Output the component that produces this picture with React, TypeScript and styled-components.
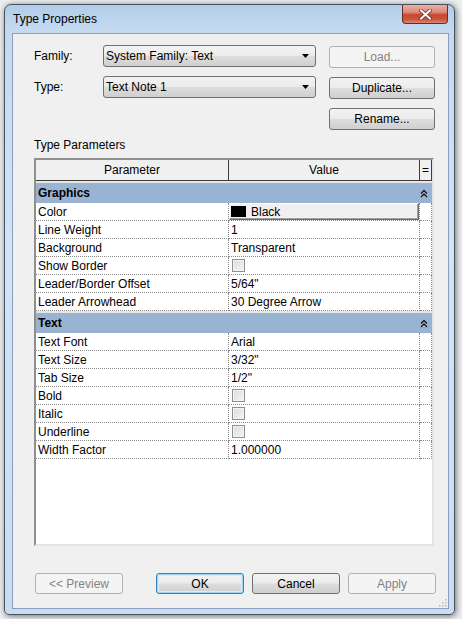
import React from "react";
import styled, { createGlobalStyle, css } from "styled-components";

const GlobalStyle = createGlobalStyle`
  html, body {
    margin: 0;
    padding: 0;
  }
  body {
    width: 462px;
    height: 619px;
    overflow: hidden;
    background: #eceef0;
    font-family: "Liberation Sans", Arial, sans-serif;
    font-size: 12px;
    color: #000;
  }
`;

const Window = styled.div`
  box-sizing: border-box;
  margin: 4px 0 0 4px;
  width: 451px;
  height: 611px;
  border: 1px solid #46525e;
  border-radius: 7px 7px 5px 5px;
  background: linear-gradient(
    180deg,
    #b2cce8 0%,
    #c4daf1 4%,
    #d2e4f6 40%,
    #c9ddf2 100%
  );
  padding: 0 5px 5px 7px;
  display: flex;
  flex-direction: column;
  box-shadow: 1px 1px 6px rgba(0, 0, 0, 0.55);
`;

const TitleBar = styled.div`
  height: 28px;
  display: flex;
  justify-content: space-between;
  align-items: flex-start;
`;

const TitleText = styled.span`
  padding-left: 1px;
  line-height: 29px;
  font-size: 12px;
  color: #000;
`;

const CloseButton = styled.div`
  box-sizing: border-box;
  width: 46px;
  height: 19px;
  margin-right: 1px;
  border: 1px solid #6b2a22;
  border-top: none;
  border-radius: 0 0 4px 4px;
  background: linear-gradient(
    180deg,
    #eab0a2 0%,
    #dc8a79 40%,
    #c6482f 55%,
    #c9553c 80%,
    #dc8a6e 100%
  );
  display: flex;
  align-items: center;
  justify-content: center;
`;

const Client = styled.div`
  position: relative;
  flex: 1;
  box-sizing: border-box;
  border: 1px solid #8a9fba;
  background: #f0f0f0;
  padding: 11px 12px 0 21px;
  display: flex;
  flex-direction: column;
`;

const FormGrid = styled.div`
  display: grid;
  grid-template-columns: 56px 213px 106px;
  grid-template-rows: repeat(3, 22px);
  column-gap: 13px;
  row-gap: 9px;
`;

const FieldLabel = styled.span`
  align-self: center;
`;

const face = css`
  border: 1px solid #707070;
  border-radius: 3px;
  background: linear-gradient(
    180deg,
    #f3f3f3 0%,
    #ebebeb 48%,
    #dddddd 52%,
    #cfcfcf 100%
  );
`;

const Combo = styled.div`
  box-sizing: border-box;
  height: 22px;
  ${face};
  display: flex;
  align-items: center;
  justify-content: space-between;
  padding: 0 6px 0 2px;
`;

const Button = styled.button<{ $wide?: boolean; $default?: boolean }>`
  box-sizing: border-box;
  width: ${({ $wide }) => ($wide ? "106px" : "88px")};
  height: ${({ $wide }) => ($wide ? "22px" : "21px")};
  margin-top: ${({ $wide }) => ($wide ? "1px" : "0")};
  ${face};
  font: inherit;
  color: #000;
  padding: 0;
  ${({ $default }) =>
    $default &&
    css`
      border-color: #3c7fb1;
      box-shadow: inset 0 0 0 1px #9fd5f3, inset 0 0 0 2px #d6eefb;
    `}
  &:disabled {
    border-color: #adb2b5;
    background: #f4f4f4;
    color: #838383;
  }
`;

const SectionLabel = styled.div`
  margin-top: 9px;
  line-height: 15px;
`;

const Table = styled.div`
  box-sizing: border-box;
  width: 400px;
  height: 388px;
  margin-top: 5px;
  border: 2px solid;
  border-color: #8f8f8f #e4e4e4 #e4e4e4 #8f8f8f;
  background: #fff;
  display: flex;
  flex-direction: column;
`;

const Columns = css`
  display: grid;
  grid-template-columns: 193px 191px 12px;
`;

const HeaderRow = styled.div`
  ${Columns};
  height: 21px;
  background: #f0f0f0;
`;

const HeaderCell = styled.div`
  box-sizing: border-box;
  border-right: 1px solid #3c3c3c;
  border-bottom: 1px solid #3c3c3c;
  display: flex;
  align-items: center;
  justify-content: center;
`;

const GroupRow = styled.div`
  box-sizing: border-box;
  height: 22px;
  border-top: 2px solid #e6e6e6;
  background: #98b4d2;
  display: flex;
  align-items: center;
  justify-content: space-between;
  padding: 0 4px 0 2px;
  font-weight: bold;
`;

const DataRow = styled.div`
  ${Columns};
  height: 18px;
`;

const Cell = styled.div`
  box-sizing: border-box;
  border-right: 1px dotted #8a8a8a;
  border-bottom: 1px dotted #8a8a8a;
  padding-left: 2px;
  display: flex;
  align-items: center;
  white-space: nowrap;
  overflow: hidden;
`;

const ColorValue = styled.div`
  box-sizing: border-box;
  flex: 1;
  height: 17px;
  margin-left: -2px;
  border: 1px solid;
  border-color: #ffffff #6a6a6a #6a6a6a #ffffff;
  box-shadow: inset -1px -1px 0 #a0a0a0;
  background: #f0f0f0;
  display: flex;
  align-items: center;
  padding-left: 1px;
  gap: 5px;
`;

const Swatch = styled.span`
  width: 15px;
  height: 11px;
  background: #000;
`;

const Checkbox = styled.span`
  box-sizing: border-box;
  width: 13px;
  height: 13px;
  margin-left: 1px;
  border: 1px solid #8e8f8f;
  background: linear-gradient(135deg, #dcdcdc 0%, #f4f4f4 100%);
  box-shadow: inset 0 0 0 1px #f4f4f4;
`;

const Footer = styled.div`
  margin-top: 27px;
  display: flex;
  gap: 8px;
`;

const PreviewSlot = styled.div`
  margin-left: 1px;
  margin-right: auto;
`;

const Grip = styled.svg`
  position: absolute;
  right: 1px;
  bottom: 1px;
`;

type Value =
  | { kind: "text"; text: string }
  | { kind: "check" }
  | { kind: "color"; text: string };

type Group = { name: string; rows: [string, Value][] };

const groups: Group[] = [
  {
    name: "Graphics",
    rows: [
      ["Color", { kind: "color", text: "Black" }],
      ["Line Weight", { kind: "text", text: "1" }],
      ["Background", { kind: "text", text: "Transparent" }],
      ["Show Border", { kind: "check" }],
      ["Leader/Border Offset", { kind: "text", text: "5/64\"" }],
      ["Leader Arrowhead", { kind: "text", text: "30 Degree Arrow" }],
    ],
  },
  {
    name: "Text",
    rows: [
      ["Text Font", { kind: "text", text: "Arial" }],
      ["Text Size", { kind: "text", text: "3/32\"" }],
      ["Tab Size", { kind: "text", text: "1/2\"" }],
      ["Bold", { kind: "check" }],
      ["Italic", { kind: "check" }],
      ["Underline", { kind: "check" }],
      ["Width Factor", { kind: "text", text: "1.000000" }],
    ],
  },
];

const Arrow = () => (
  <svg width="7" height="4" viewBox="0 0 7 4">
    <path d="M0 0 H7 L3.5 4 Z" fill="#000" />
  </svg>
);

const Collapse = () => (
  <svg width="8" height="9" viewBox="0 0 8 9">
    <path
      d="M1 4.5 L4 1.5 L7 4.5 M1 8 L4 5 L7 8"
      fill="none"
      stroke="#1b1b1b"
      strokeWidth="1.4"
    />
  </svg>
);

const CloseX = () => (
  <svg width="13" height="11" viewBox="0 0 13 11">
    <path
      d="M2 1.5 L11 9.5 M11 1.5 L2 9.5"
      stroke="#7a2a1f"
      strokeWidth="3.6"
      strokeLinecap="square"
    />
    <path
      d="M2 1.5 L11 9.5 M11 1.5 L2 9.5"
      stroke="#ffffff"
      strokeWidth="2"
      strokeLinecap="square"
    />
  </svg>
);

const renderValue = (v: Value) => {
  if (v.kind === "check") return <Checkbox />;
  if (v.kind === "color")
    return (
      <ColorValue>
        <Swatch />
        {v.text}
      </ColorValue>
    );
  return v.text;
};

const App = () => {
  return (
    <>
      <GlobalStyle />
      <Window>
        <TitleBar>
          <TitleText>Type Properties</TitleText>
          <CloseButton>
            <CloseX />
          </CloseButton>
        </TitleBar>
        <Client>
          <FormGrid>
            <FieldLabel>Family:</FieldLabel>
            <Combo>
              System Family: Text
              <Arrow />
            </Combo>
            <Button $wide disabled>
              Load...
            </Button>
            <FieldLabel>Type:</FieldLabel>
            <Combo>
              Text Note 1
              <Arrow />
            </Combo>
            <Button $wide>Duplicate...</Button>
            <span />
            <span />
            <Button $wide>Rename...</Button>
          </FormGrid>

          <SectionLabel>Type Parameters</SectionLabel>
          <Table>
            <HeaderRow>
              <HeaderCell>Parameter</HeaderCell>
              <HeaderCell>Value</HeaderCell>
              <HeaderCell>=</HeaderCell>
            </HeaderRow>
            {groups.map((g) => (
              <React.Fragment key={g.name}>
                <GroupRow>
                  {g.name}
                  <Collapse />
                </GroupRow>
                {g.rows.map(([name, value]) => (
                  <DataRow key={name}>
                    <Cell>{name}</Cell>
                    <Cell>{renderValue(value)}</Cell>
                    <Cell />
                  </DataRow>
                ))}
              </React.Fragment>
            ))}
          </Table>

          <Footer>
            <PreviewSlot>
              <Button disabled>&lt;&lt; Preview</Button>
            </PreviewSlot>
            <Button $default>OK</Button>
            <Button>Cancel</Button>
            <Button disabled>Apply</Button>
          </Footer>

          <Grip width="10" height="10" viewBox="0 0 10 10">
            {[
              [8, 2],
              [8, 5],
              [5, 5],
              [8, 8],
              [5, 8],
              [2, 8],
            ].map(([x, y]) => (
              <rect key={`${x}-${y}`} x={x} y={y} width="1.5" height="1.5" fill="#b9b9b9" />
            ))}
          </Grip>
        </Client>
      </Window>
    </>
  );
};

export default App;
